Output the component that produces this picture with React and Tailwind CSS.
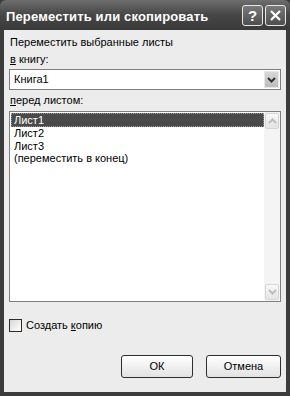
import React from 'react';

const font = { fontFamily: '"Liberation Sans", Arial, sans-serif' };

function Chevron({ up = false, className = '' }) {
  return (
    <svg width="9" height="6" viewBox="0 0 9 6" className={className}>
      <path
        d={up ? 'M1 5 L4.5 1.5 L8 5' : 'M1 1 L4.5 4.5 L8 1'}
        fill="none"
        stroke="currentColor"
        strokeWidth="2"
      />
    </svg>
  );
}

function TitleButton({ children }) {
  return (
    <div className="w-[21px] h-[21px] rounded-[3px] border border-[#e8e8e8] bg-gradient-to-b from-[#7a7a7a] to-[#4e4e4e] flex items-center justify-center text-white">
      {children}
    </div>
  );
}

export default function App() {
  return (
    <div className="w-[290px] h-[396px] bg-[#3c3c3c] flex flex-col" style={font}>
      {/* title bar */}
      <div className="h-[30px] shrink-0 rounded-t-[6px] bg-gradient-to-b from-[#6e6e6e] via-[#464646] to-[#3a3a3a] flex items-center pl-[6px] pr-[4px]">
        <span className="flex-1 text-white font-bold text-[13px] tracking-[0.15px] leading-none pt-[2px]">
          Переместить или скопировать
        </span>
        <div className="flex gap-[2px]">
          <TitleButton>
            <span className="font-bold text-[15px] leading-none">?</span>
          </TitleButton>
          <TitleButton>
            <svg width="13" height="13" viewBox="0 0 13 13">
              <path d="M2 2 L11 11 M11 2 L2 11" stroke="white" strokeWidth="2.2" />
            </svg>
          </TitleButton>
        </div>
      </div>

      {/* body */}
      <div className="flex-1 mx-[4px] mb-[4px] bg-[#ececec] flex flex-col px-[5px] pt-[6px] text-[11px] text-black leading-[13px]">
        <div className="h-[13px] pl-[1px]">Переместить выбранные листы</div>
        <div className="h-[13px] mt-[4px] pl-[1px]">
          <span className="underline">в</span> книгу:
        </div>
        <div className="mt-[3px] h-[21px] border border-[#7f7f7f] bg-white flex items-center">
          <span className="flex-1 pl-[4px]">Книга1</span>
          <div className="w-[15px] h-[17px] mr-[1px] bg-gradient-to-b from-[#d8d8d8] to-[#bcbcbc] border border-[#e8e8e8] flex items-center justify-center text-[#333]">
            <Chevron />
          </div>
        </div>
        <div className="h-[13px] mt-[4px] pl-[1px]">
          <span className="underline">п</span>еред листом:
        </div>
        <div className="mt-[4px] h-[191px] border border-[#7f7f7f] bg-white flex">
          <div className="flex-1 flex flex-col pt-[1px] pl-[1px]">
            <div className="h-[14px] bg-[#4a4a4a] text-white pl-[3px] outline-1 outline-dotted outline-[#999] -outline-offset-1 leading-[14px]">
              Лист1
            </div>
            <div className="pl-[3px] h-[12.5px] leading-[13px]">Лист2</div>
            <div className="pl-[3px] h-[12.5px] leading-[13px]">Лист3</div>
            <div className="pl-[3px] h-[12.5px] leading-[13px]">(переместить в конец)</div>
          </div>
          <div className="w-[16px] bg-[#f4f4f4] flex flex-col justify-between p-[1px]">
            <div className="h-[16px] bg-gradient-to-b from-[#f8f8f8] to-[#e4e4e4] border border-[#d6d6d6] rounded-[2px] flex items-center justify-center text-[#bdbdbd]">
              <Chevron up />
            </div>
            <div className="h-[16px] bg-gradient-to-b from-[#f8f8f8] to-[#e4e4e4] border border-[#d6d6d6] rounded-[2px] flex items-center justify-center text-[#bdbdbd]">
              <Chevron />
            </div>
          </div>
        </div>

        <div className="mt-[17px] flex items-center gap-[4px]">
          <div className="w-[13px] h-[13px] border border-[#2b2b2b] bg-gradient-to-br from-[#d8d8d8] to-white" />
          <span>
            Создать <span className="underline">к</span>опию
          </span>
        </div>

        <div className="mt-[23px] flex justify-end gap-[13px]">
          <button className="w-[72px] h-[23px] rounded-[3px] border border-[#2e2e2e] bg-gradient-to-b from-white to-[#e2e2e2] text-[11px] text-black">
            ОК
          </button>
          <button className="w-[75px] h-[23px] rounded-[3px] border border-[#2e2e2e] bg-gradient-to-b from-white to-[#e2e2e2] text-[11px] text-black">
            Отмена
          </button>
        </div>
      </div>
    </div>
  );
}
